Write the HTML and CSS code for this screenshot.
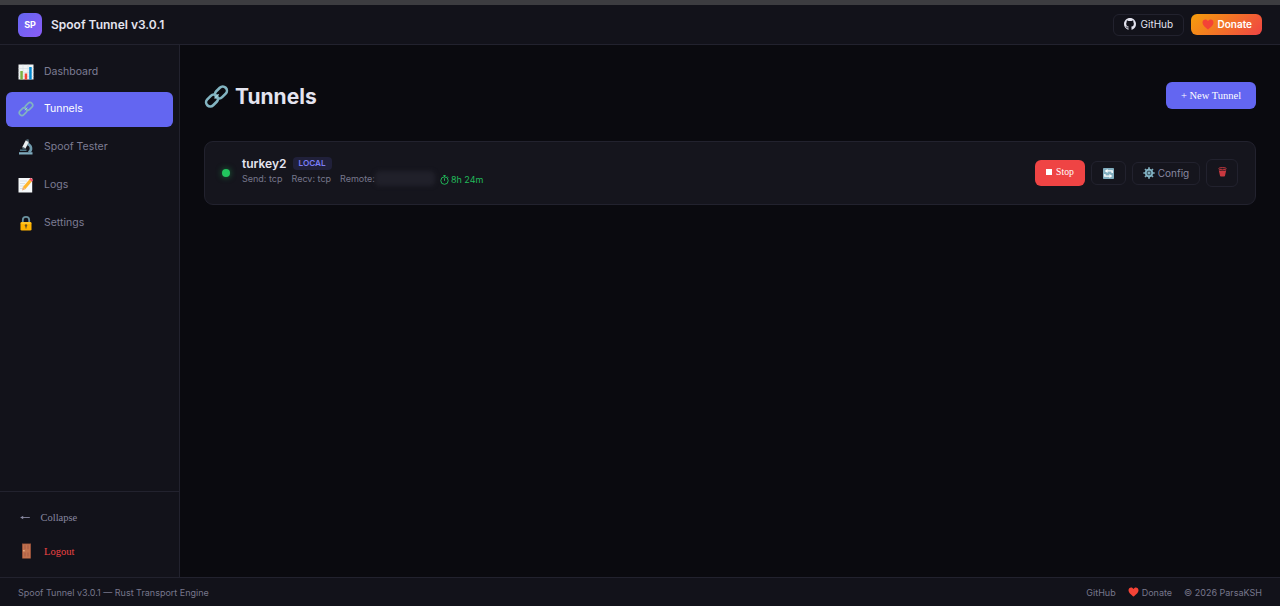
FILE: index.html
```html
<!DOCTYPE html>
<html lang="en">
<head>
<meta charset="utf-8">
<title>Spoof Tunnel</title>
<link rel="stylesheet" href="styles.css">
</head>
<body>
<svg class="defs" aria-hidden="true">
  <defs>
    <symbol id="link" viewBox="0 0 24 24">
      <g fill="none" stroke-linecap="round" stroke-linejoin="round" stroke="#82b4c1" stroke-width="2.5">
        <rect x="9.9" y="4.1" width="12.8" height="8" rx="4" transform="rotate(-45 16.3 8.1)"/>
        <rect x="1.300" y="11.9" width="12.8" height="8" rx="4" transform="rotate(-45 7.7 15.9)"/>
      </g>
      <path d="M10.6 13.4l3-3" stroke="#a5d0da" stroke-width="1.400" stroke-linecap="round"/>
    </symbol>
    <symbol id="heart" viewBox="0 0 24 22">
      <path fill="#f44336" d="M12 21C9 18.500 1 13 1 7c0-3.500 2.500-6 5.700-6C9 1 11 2.300 12 4.500 13 2.300 15 1 17.300 1 20.500 1 23 3.500 23 7c0 6-8 11.500-11 14z"/>
    </symbol>
  </defs>
</svg>
<div class="app">
  <div class="strip"></div>
  <header class="topbar">
    <div class="brand"><span class="logo">SP</span><span class="brand-name">Spoof Tunnel v3.0.1</span></div>
    <div class="top-actions">
      <a class="github">
        <svg width="12" height="12" viewBox="0 0 16 16" fill="#e4e4ef"><path d="M8 0C3.580 0 0 3.580 0 8c0 3.540 2.290 6.530 5.470 7.590.4.070.55-.17.55-.38v-1.490c-2.010.37-2.530-.49-2.690-.94-.09-.23-.48-.94-.82-1.130-.28-.15-.68-.52-.01-.53.63-.01 1.080.58 1.230.82.72 1.210 1.870.87 2.330.66.070-.52.28-.87.510-1.070-1.780-.2-3.640-.89-3.640-3.950 0-.87.310-1.590.82-2.150-.08-.2-.36-1.020.080-2.120 0 0 .67-.21 2.200.82.640-.18 1.320-.27 2-.27s1.360.09 2 .27c1.530-1.040 2.200-.82 2.200-.82.440 1.100.160 1.920.080 2.120.510.560.820 1.270.820 2.150 0 3.070-1.870 3.750-3.650 3.950.290.250.540.730.540 1.480v2.200c0 .210.150.460.550.380A8 8 0 0 0 16 8c0-4.420-3.580-8-8-8z"/></svg>
        <span>GitHub</span>
      </a>
      <a class="donate"><svg width="12" height="11"><use href="#heart"/></svg><span>Donate</span></a>
    </div>
  </header>
  <div class="body">
    <aside class="sidebar">
      <nav class="nav">
        <a class="item">
          <svg width="16" height="16" viewBox="0 0 16 16"><path fill="#f1f4f5" d="M.5.500h15v15H.5z"/><path d="M.5 4.500h15M.5 8.500h15M.5 12.500h15M5 .5v15M10 .5v15" stroke="#cfd8dc" stroke-width=".5"/><path fill="#7cb342" d="M2.300 7h2.500v8.500H2.300z"/><path fill="#f44336" d="M6.700 9.500h2.500v6H6.700z"/><path fill="#0288d1" d="M11.200 3h2.500v12.500h-2.500z"/></svg>
          <span>Dashboard</span></a>
        <a class="item active"><svg width="16" height="16"><use href="#link"/></svg><span>Tunnels</span></a>
        <a class="item">
          <svg width="16" height="16" viewBox="0 0 16 16"><path fill="#7fabbd" d="M1 13.200h13.500v2.300H1z"/><path fill="#4f7686" d="M2 10.500h6.500v1.500H2z"/><path d="M9.500 5c4.300 1.500 4.600 6 1.300 8.500" fill="none" stroke="#6f9aac" stroke-width="2.600"/><path d="M9.400 2L5.800 9" stroke="#e9eef0" stroke-width="3.600"/><path d="M10 .4L9.300 2.200M5.900 8.500l-.6 1.400" stroke="#4b6470" stroke-width="2.500"/></svg>
          <span>Spoof Tester</span></a>
        <a class="item">
          <svg width="16" height="16" viewBox="0 0 16 16"><path fill="#f5f8fa" d="M.5 1h13.700v14.500H.5z"/><path d="M2 4h7M2 6.500h5M2 9h4M2 11.500h3" stroke="#b9c9d2" stroke-width=".5"/><path d="M6 11.300l6.600-7.800" stroke="#ffb62e" stroke-width="3.300"/><path d="M12.500 3.600L14 1.900" stroke="#ef5064" stroke-width="3.400"/><path fill="#e8a977" d="M4.700 10.200l2.600 2.100-3.200 1.300z"/></svg>
          <span>Logs</span></a>
        <a class="item">
          <svg width="16" height="16" viewBox="0 0 16 16"><path d="M4.800 8V5C4.800 .7 11.200 .7 11.200 5V8" fill="none" stroke="#6a919f" stroke-width="1.800"/><rect x="2.500" y="7" width="11" height="8.500" rx="1.300" fill="#ffb300"/><path d="M3.500 8h9" stroke="#ffd54f"/><circle cx="8" cy="10.500" r="1.200" fill="#665127"/><path d="M8 10.500v3" stroke="#665127"/></svg>
          <span>Settings</span></a>
      </nav>
      <div class="side-foot">
        <button class="side-btn collapse"><svg width="10" height="6" viewBox="0 0 10 6"><path d="M.8 3.500h9" stroke="#8888a0" stroke-width=".9"/><path d="M.3 3.500l2.900-1.700v3.400z" fill="#8888a0"/></svg><span>Collapse</span></button>
        <button class="side-btn logout"><svg width="16" height="16" viewBox="0 0 16 16"><path fill="#945039" d="M4 .5h9v15H4z"/><path fill="#c2724e" d="M5 1.200h7v14H5z"/><path fill="#b4664a" d="M6 2.300h2v4H6zM9 2.300h2v4H9zM6 9.500h2v4H6zM9 9.500h2v4H9z"/><circle cx="5.900" cy="7.800" r=".8" fill="#f4c396"/></svg><span>Logout</span></button>
      </div>
    </aside>
    <main class="main">
      <div class="page-head">
        <h1><svg width="25" height="25"><use href="#link"/></svg><span>Tunnels</span></h1>
        <button class="new">+ New Tunnel</button>
      </div>
      <section class="card">
        <span class="status"></span>
        <div class="info">
          <div class="name-row"><span class="name">turkey2</span><span class="tag">LOCAL</span></div>
          <div class="meta"><span>Send: tcp</span><span>Recv: tcp</span><span class="remote">Remote:<i class="masked"></i></span>
            <span class="uptime"><svg width="9" height="10" viewBox="0 0 9 10" fill="none" stroke="#22c55e" stroke-width=".9"><circle cx="4.500" cy="5.600" r="3.700"/><path d="M4.500 5.800V3.300M3.300.6h2.400M4.500.6v1.300M7.200 1.500l1 1"/></svg>8h 24m</span></div>
        </div>
        <div class="actions">
          <button class="stop"><i></i><span>Stop</span></button>
          <button class="ghost refresh"><svg width="11" height="11" viewBox="0 0 12 12"><rect width="12" height="12" rx=".8" fill="#82aebf"/><path d="M10 5.500V3.200H4.500M2 6.500v2.300h5.500" fill="none" stroke="#fff" stroke-width="1.500"/><path fill="#fff" d="M5 1L1.800 3.200 5 5.400zM7 6.600l3.200 2.200L7 11z"/></svg></button>
          <button class="ghost config"><svg width="12" height="12" viewBox="0 0 12 12"><g stroke="#82aebf" stroke-width="1.700"><path d="M6 .3v11.400M.3 6h11.400M2 2l8 8M10 2l-8 8"/></g><circle cx="6" cy="6" r="3.300" fill="#3d5562" stroke="#82b4c5" stroke-width="1.700"/><circle cx="6" cy="6" r="1.300" fill="#82aebf"/></svg><span>Config</span></button>
          <button class="ghost delete"><svg width="9" height="10" viewBox="0 0 9 10"><ellipse cx="4.500" cy="1.700" rx="3.800" ry="1.100" fill="none" stroke="#d93d43" stroke-width=".9"/><path fill="#c9383f" d="M.8 3.200q3.700 1 7.400 0L6.900 9.200q-2.400.7-4.800 0z"/></svg></button>
        </div>
      </section>
    </main>
  </div>
  <footer class="footer">
    <span>Spoof Tunnel v3.0.1 — Rust Transport Engine</span>
    <div class="foot-links"><span>GitHub</span><span class="foot-donate"><svg width="11" height="10"><use href="#heart"/></svg>Donate</span><span>© 2026 ParsaKSH</span></div>
  </footer>
</div>
</body>
</html>
```
FILE: styles.css
```css
* { box-sizing: border-box; }
body { margin: 0; background: #0a0a0f; color: #e4e4ef; font-family: Inter, "Liberation Sans", sans-serif; }
button { font-family: "Liberation Serif", serif; border: 0; padding: 0; margin: 0; background: none; }
svg { display: block; flex: none; }
.defs { position: absolute; width: 0; height: 0; }
.app { height: 606px; display: flex; flex-direction: column; overflow: hidden; }
.strip { height: 5px; background: #3c3c40; flex: none; }

.topbar { height: 40px; flex: none; display: flex; align-items: center; justify-content: space-between; padding: 0 18px; background: #12121a; border-bottom: 1px solid #22222e; }
.brand { display: flex; align-items: center; gap: 9px; }
.logo { width: 24px; height: 24px; border-radius: 6px; background: linear-gradient(135deg, #6366f1, #8b5cf6); color: #fff; font-size: 9px; font-weight: 700; display: grid; place-items: center; padding-bottom: 1px; }
.brand-name { font-size: 12px; font-weight: 600; }
.top-actions { display: flex; gap: 7px; align-items: center; }
.github, .donate { display: flex; align-items: center; font-size: 10px; border-radius: 6px; }
.github { width: 71px; height: 22px; gap: 4.500px; padding: 0 0 1px 10.500px; border: 1px solid #22222e; font-weight: 400; }
.donate { width: 71.500px; height: 21px; gap: 4px; padding: 0 0 1px 11px; color: #fff; font-weight: 600; background: linear-gradient(135deg, #f59e0b, #ef4444); }

.body { flex: 1; min-height: 0; display: flex; }
.sidebar { width: 180px; flex: none; background: #12121a; border-right: 1px solid #22222e; display: flex; flex-direction: column; justify-content: space-between; }
.nav { display: flex; flex-direction: column; gap: 2.700px; padding: 9.300px 6px 0; }
.item { height: 35px; display: flex; align-items: center; gap: 10px; padding-left: 12px; border-radius: 6px; color: #7d7d94; font-size: 10.500px; }
.item span { padding-bottom: 1px; }
.item.active { background: #6366f1; color: #fff; }
.side-foot { height: 86px; border-top: 1px solid #22222e; padding: 8px 6px 0; }
.side-btn { height: 34px; width: 100%; display: flex; align-items: center; font-size: 10.500px; }
.collapse { color: #8888a0; gap: 10.500px; padding-left: 14px; }
.logout { color: #ef4444; gap: 10px; padding-left: 12px; }

.main { flex: 1; padding: 37px 24px 0; }
.page-head { display: flex; justify-content: space-between; align-items: center; height: 28px; }
h1 { display: flex; align-items: center; gap: 6px; margin: 0; font-size: 21px; line-height: 28px; font-weight: 700; }
h1 span { padding-top: 1px; }
.new { width: 90px; height: 27px; margin-bottom: 1px; padding-bottom: 1px; border-radius: 6px; background: #6366f1; color: #fff; font-size: 10.500px; }
.card { margin-top: 31px; height: 64px; border: 1px solid #22222e; border-radius: 9px; background: #15151d; display: flex; align-items: center; padding: 0 17px; }
.status { width: 8px; height: 8px; border-radius: 50%; background: #22c55e; box-shadow: 0 0 6px #22c55e88; }
.info { margin-left: 12px; padding-bottom: 4px; }
.name-row { display: flex; align-items: center; gap: 6px; height: 15px; }
.name { font-size: 12px; font-weight: 600; }
.tag { height: 13px; line-height: 13px; padding: 0 6px; border-radius: 4px; background: #20203a; color: #7b7df5; font-size: 8.200px; font-weight: 600; margin-top: 1px; }
.meta { display: flex; align-items: center; gap: 9px; height: 16px; font-size: 9px; color: #77778c; }
.remote { display: flex; align-items: center; margin-right: -4px; }
.masked { width: 60px; height: 15px; border-radius: 5px; background: #20202a; filter: blur(2px); }
.uptime { display: flex; align-items: center; gap: 2px; color: #22b95a; padding-top: 2px; }
.actions { margin-left: auto; display: flex; gap: 6px; align-items: center; }
.stop { width: 50px; height: 26px; border-radius: 6px; background: #ef4444; color: #fff; font-size: 9.700px; display: flex; align-items: center; justify-content: center; gap: 4px; padding-bottom: 3px; }
.stop i { width: 6px; height: 6px; background: #fff; }
.ghost { border: 1px solid #22222e; border-radius: 6px; display: flex; align-items: center; justify-content: center; }
.refresh { width: 35px; height: 24px; }
.config { width: 68px; height: 23px; gap: 3px; color: #8888a0; font: 400 10px Inter, sans-serif; }
.config span { padding-bottom: 1px; }
.delete { width: 32px; height: 28px; padding-bottom: 3px; }

.footer { height: 29px; flex: none; background: #12121a; border-top: 1px solid #22222e; padding: 0 18px; display: flex; align-items: center; justify-content: space-between; font-size: 9px; color: #77778c; }
.foot-links { display: flex; gap: 12px; }
.foot-donate { display: flex; align-items: center; gap: 3px; }
```
